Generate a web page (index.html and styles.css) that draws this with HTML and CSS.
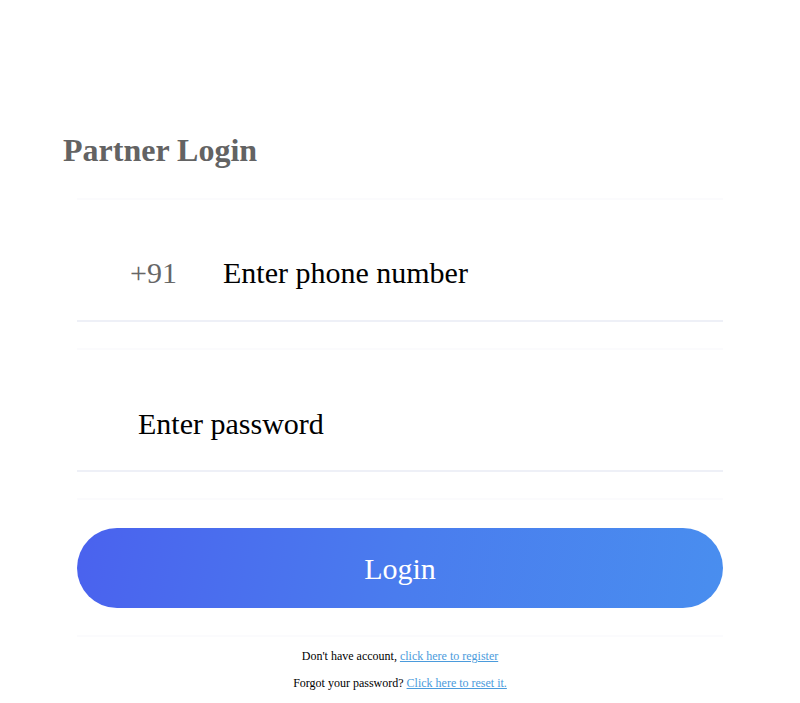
FILE: index.html
```html
<!DOCTYPE html>
<html>
<head>
<meta charset="utf-8">
<link rel="stylesheet" href="styles.css">
</head>
<body>
<div class="page">
  <h1 class="title">Partner Login</h1>
  <form class="form">
    <div class="field phone">
      <span class="code">+91</span>
      <span class="placeholder">Enter phone number</span>
    </div>
    <div class="field pass">
      <span class="placeholder">Enter password</span>
    </div>
    <div class="btn-wrap">
      <div class="btn">Login</div>
    </div>
  </form>
  <div class="links">
    <p>Don't have account, <a href="#">click here to register</a></p>
    <p>Forgot your password? <a href="#">Click here to reset it.</a></p>
  </div>
</div>
</body>
</html>
```

FILE: styles.css
```css
html, body {
  margin: 0;
  padding: 0;
  background: #ffffff;
  font-family: "Liberation Serif", "Times New Roman", serif;
}
.page {
  padding: 132px 63px 0 63px;
}
.title {
  margin: 0;
  font-size: 32px;
  font-weight: bold;
  color: #636363;
  line-height: 37px;
}
.form {
  margin: 29px 14px 0 14px;
}
.field {
  height: 124px;
  box-sizing: border-box;
  border-top: 2px solid #fbfbfd;
  border-bottom: 2px solid #eef0f7;
  display: flex;
  align-items: flex-start;
  font-size: 30px;
  line-height: 34px;
  margin-bottom: 26px;
}
.phone {
  padding: 56px 0 0 53px;
}
.code {
  color: #666666;
  width: 93px;
}
.placeholder {
  color: #000;
}
.pass {
  padding: 57px 0 0 61px;
}
.btn-wrap {
  border-top: 2px solid #fbfbfd;
  border-bottom: 2px solid #fbfbfd;
  padding: 28px 0 27px 0;
}
.btn {
  height: 80px;
  border-radius: 40px;
  background: linear-gradient(100deg, #4a62ee 0%, #4a7cee 50%, #498eef 100%);
  color: #ffffff;
  font-size: 30px;
  display: flex;
  align-items: center;
  justify-content: center;
  padding-top: 2px;
  box-sizing: border-box;
}
.links {
  text-align: center;
  font-size: 12px;
  margin-top: 6px;
  color: #000;
}
.links p {
  margin: 0;
  line-height: 27px;
}
.links a {
  color: #4b9bdc;
  text-decoration: underline;
}
```
